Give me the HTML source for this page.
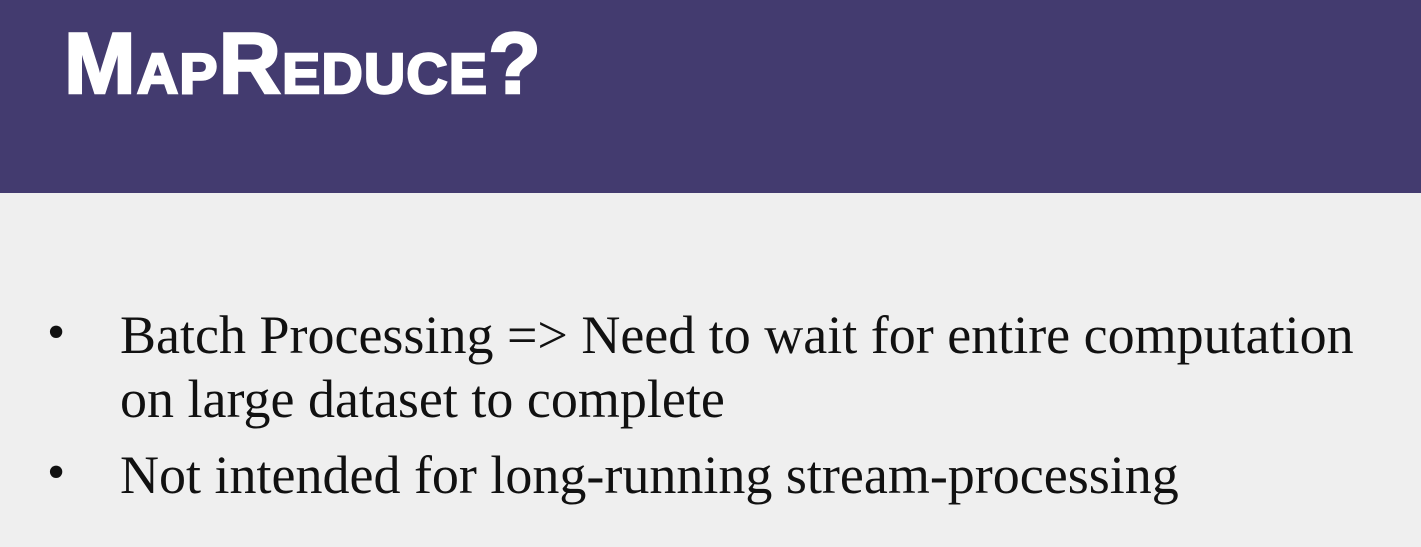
<!DOCTYPE html>
<html><head><style>
body{margin:0;width:1421px;height:547px;background:#efefef;overflow:hidden;position:relative}
.hd{position:absolute;left:0;top:0;width:1421px;height:193px;background:#433b6f}
.t{position:absolute;left:64px;top:14px;font-family:"Liberation Sans",sans-serif;font-weight:bold;color:#fff;font-size:86px;line-height:100px;letter-spacing:1.3px;-webkit-text-stroke:2.5px #fff;white-space:nowrap}
.t small{font-size:57px}
.b{position:absolute;font-family:"Liberation Serif",serif;font-size:54px;color:#111;white-space:nowrap;line-height:64px}
.d{position:absolute;left:47px;font-family:"Liberation Serif",serif;font-size:52px;color:#111}
</style></head><body>
<div class="hd"></div>
<div class="t">M<small>AP</small>R<small>EDUCE</small>?</div>
<div class="d" style="top:303px">•</div>
<div class="b" style="left:120px;top:303px">Batch Processing =&gt; Need to wait for entire computation<br>on large dataset to complete</div>
<div class="d" style="top:443px">•</div>
<div class="b" style="left:120px;top:443px">Not intended for long-running stream-processing</div>
</body></html>
